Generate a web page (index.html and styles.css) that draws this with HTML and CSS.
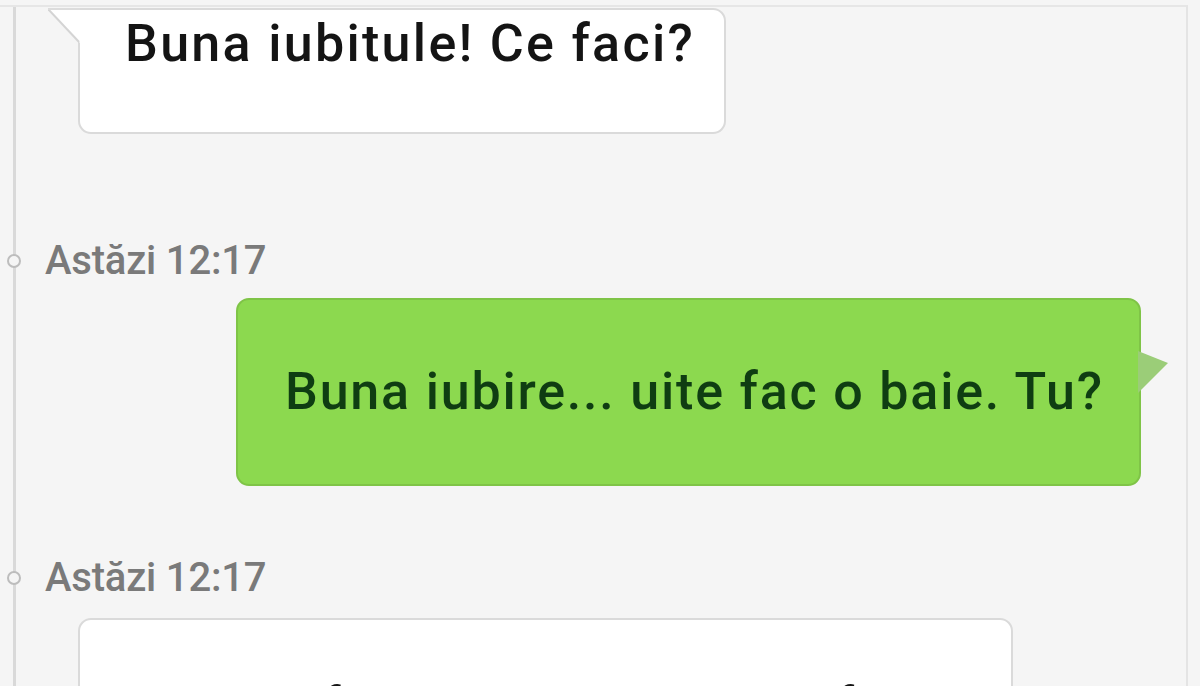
FILE: index.html
```html
<!DOCTYPE html>
<html lang="ro">
<head>
<meta charset="utf-8">
<title>Chat</title>
<link rel="stylesheet" href="styles.css">
</head>
<body>
<div class="screen">
  <div class="thread">
    <div class="bubble in first">
      <svg class="tail-in" width="32" height="36" viewBox="0 0 32 36">
        <path d="M0 1 L32 1 L32 35 Z" fill="#ffffff"/>
        <path d="M0 1 L31 34" stroke="#d4d4d4" stroke-width="2" fill="none"/>
        <path d="M0 1 H32" stroke="#dcdcdc" stroke-width="2" fill="none"/>
      </svg>
      <p class="msg">Buna iubitule! Ce faci?</p>
    </div>

    <div class="stamp s1">
      <span class="dot"></span>
      <span class="time">Astăzi 12:17</span>
    </div>

    <div class="bubble out">
      <p class="msg">Buna iubire... uite fac o baie. Tu?</p>
      <svg class="tail-out" width="32" height="44" viewBox="0 0 32 44">
        <path d="M0 0 L30 12 L0 42 Z" fill="#9bcd78"/>
      </svg>
    </div>

    <div class="stamp s2">
      <span class="dot"></span>
      <span class="time">Astăzi 12:17</span>
    </div>

    <div class="bubble in last">
      <p class="msg">Nu mai face nimic? Și tu ce faci</p>
    </div>
  </div>
</div>
</body>
</html>
```

FILE: styles.css
```css
html, body {
  margin: 0;
  padding: 0;
  height: 686px;
  overflow: hidden;
  background: #f5f5f5;
}

body {
  font-family: Roboto, "Noto Sans", "Liberation Sans", sans-serif;
  padding-top: 5px;
  box-sizing: border-box;
}

.screen {
  width: 1188px;
  height: 681px;
  overflow: hidden;
  border-top: 2px solid #e6e6e6;
  border-right: 2px solid #e4e4e4;
  box-sizing: border-box;
}

.thread {
  margin-left: 13px;
  border-left: 3px solid #d9d9d9;
  height: 100%;
  display: flex;
  flex-direction: column;
  align-items: flex-start;
}

.thread > * {
  flex: none;
}

.bubble {
  position: relative;
  box-sizing: border-box;
  border-radius: 13px;
}

.bubble.in {
  background: #ffffff;
  border: 2px solid #dadada;
  margin-left: 62px;
}

.bubble.first {
  width: 648px;
  height: 126px;
  margin-top: 1px;
  border-top-left-radius: 0;
  padding: 4px 0 0 45px;
}

.bubble.last {
  width: 935px;
  height: 140px;
  margin-top: 17px;
  padding: 57px 0 0 48px;
}

.bubble.out {
  background: #8cd94f;
  border: 2px solid #7fc447;
  margin-left: 220px;
  margin-top: 14px;
  width: 905px;
  height: 188px;
  padding: 62px 0 0 47px;
}

.msg {
  margin: 0;
  font-size: 52px;
  font-weight: 500;
  line-height: 60px;
  color: #141414;
  white-space: nowrap;
  letter-spacing: 2.3px;
}

.bubble.out .msg {
  color: #0f3d12;
  letter-spacing: 1.8px;
}

.tail-in {
  position: absolute;
  left: -32px;
  top: -2px;
}

.tail-out {
  position: absolute;
  right: -31px;
  top: 51px;
}

.stamp {
  display: flex;
  align-items: center;
  height: 46px;
  margin-left: -9px;
}

.stamp.s1 {
  margin-top: 104px;
}

.stamp.s2 {
  margin-top: 69px;
}

.dot {
  width: 10px;
  height: 10px;
  border: 2px solid #bdbdbd;
  border-radius: 50%;
  background: #f5f5f5;
  flex: none;
}

.time {
  margin-left: 24px;
  font-size: 40px;
  font-weight: 500;
  line-height: 46px;
  color: #7a7a7a;
  letter-spacing: -0.2px;
}
```
